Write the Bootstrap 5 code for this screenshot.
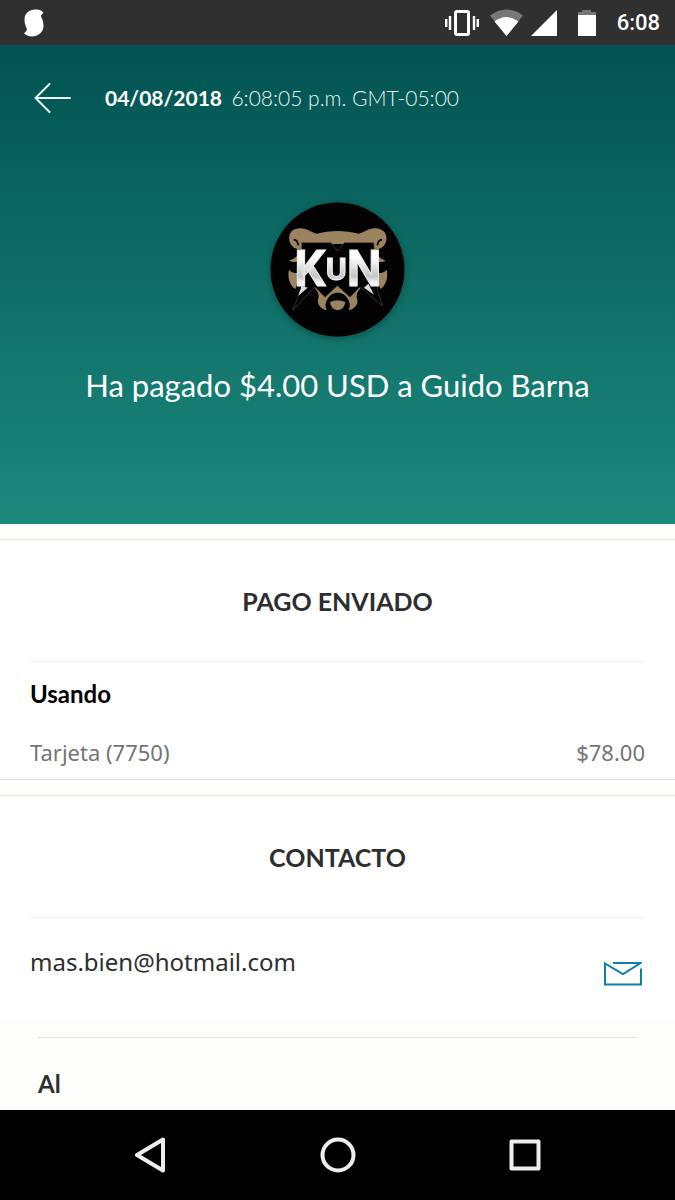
<!DOCTYPE html>
<html lang="es">
<head>
<meta charset="utf-8">
<meta name="viewport" content="width=device-width, initial-scale=1">
<title>Detalles del pago</title>
<link href="https://cdn.jsdelivr.net/npm/bootstrap@5.3.0/dist/css/bootstrap.min.css" rel="stylesheet">
<style>
  body { font-family: Lato, "Noto Sans", sans-serif; background: #fdfdfb; color: #2c2e2f; }
  svg { display: block; flex-shrink: 0; }
  .status-bar { height: 45px; background: #303030; padding: 0 15px 0 24px; }
  .clock { font: 500 22px/28px Roboto, sans-serif; color: #fff; }
  .hero { background: linear-gradient(#025351, #1c897c); padding: 37px 33px 119px; }
  .stamp { font-size: 21px; line-height: 32px; color: #e6f4f3; margin-left: 34px; }
  .hero-title { font-size: 31px; line-height: 40px; }
  .avatar { filter: drop-shadow(0 2px 3px rgba(0, 0, 0, .3)); margin-top: 88px; margin-bottom: 28px; }
  .panel { background: #fff; border: solid #e4e5e5; border-width: 1px 0; margin-top: 15px; padding: 0 30px; }
  .panel-open { border-bottom: 0; }
  .panel-title { font-size: 25px; line-height: 32px; padding: 45px 0 44px; border-bottom: 1px solid #eeefef; }
  .entry { font-size: 24px; line-height: 32px; }
  .email, .amount { font-family: "Noto Sans", sans-serif; }
  .email { font-size: 24px; line-height: 32px; }
  .amount { font-size: 22px; line-height: 30px; color: #737475; padding: 27px 0 12px; }
  .contact { padding: 28px 3px 36px 0; }
  .more { margin: 15px 38px 0; padding-top: 30px; border-top: 1px solid #e1e3e3; }
  .nav-keys { height: 90px; background: #000; padding: 0 56px; }
</style>
</head>
<body class="d-flex flex-column min-vh-100">

<header class="status-bar d-flex align-items-center">
  <svg width="20" height="28" viewBox="0 0 20 28" fill="#fff" aria-hidden="true"><path d="M19.500 3.500l-2.500 3C17 8.500 19.500 11 19.500 17 19.500 23 14 27.500 8 27.500c-3 0-5.500-1-8-3L3 21C3 19 0.500 16 .5 10.500 .5 4 5.500.5 11 .5c3.500 0 6 .5 8.500 3z"/></svg>
  <div class="d-flex align-items-center ms-auto">
    <svg width="152" height="28" viewBox="0 0 152 28" aria-hidden="true">
      <rect x="10.500" y="2.500" width="13" height="23" rx="1.500" fill="none" stroke="#fff" stroke-width="3"/>
      <path d="M5 7v14M1.200 10v8M29 7v14M32.800 10v8" stroke="#fff" stroke-width="2.400"/>
      <path d="M45 6.500Q61-5.500 78 6.500L61.500 27z" fill="#777"/>
      <path d="M49.500 12.500Q61 3.500 73.500 12.500L61.500 27z" fill="#fff"/>
      <path d="M112 1v26H86z" fill="#fff"/>
      <path d="M137 1h9v2h5v4h-18V3h4z" fill="#777"/>
      <path d="M133 6h18v21h-18z" fill="#fff"/>
    </svg>
    <span class="clock ms-3 ps-1">6:08</span>
  </div>
</header>

<main class="flex-grow-1">
  <section class="hero text-white text-center">
    <div class="d-flex align-items-center text-start">
      <button type="button" class="btn p-0 border-0" aria-label="Volver">
        <svg width="38" height="30" viewBox="0 0 38 30" fill="none" stroke="#e6f4f3" stroke-width="2" stroke-linecap="round" stroke-linejoin="round"><path d="M16.500 1L2.500 15l14 14M2.500 15H37"/></svg>
      </button>
      <div class="stamp"><strong class="text-white me-1">04/08/2018</strong> <span class="fw-light">6:08:05 p.m. GMT-05:00</span></div>
    </div>
    <svg class="avatar mx-auto" width="135" height="135" viewBox="30 31 405 405" role="img" aria-label="Guido Barna">
      <circle cx="232.500" cy="233.500" r="201" fill="#020202"/>
      <g fill="#9b835f">
        <path d="M88 145C84 119 104 108 125 110c20 2 30 14 46 16 40-11 84-11 124 0 16-2 26-14 46-16 21-2 42 10 38 35-2 18-17 29-34 27 2 15 10 27 32 35-15 8-35 3-46-6l-12-44H145l-12 44c-11 9-31 14-46 6 22-8 34-20 36-35-18 2-33-9-35-27z"/>
        <path d="M87 234c8 9 20 13 36 8l-17 50c-15-9-25-33-19-58zM380 234c-8 9-20 13-36 8l17 50c15-9 25-33 19-58z"/>
        <path d="M165 290l38-20h60l38 20c-11 14-13 20-9 34 3 15-10 29-26 31 5-11 5-21-2-32-7-14-18-20-31-20s-24 6-31 20c-7 11-7 21-2 32-16-2-29-16-26-31 4-14 2-20-9-34z"/>
        <path d="M210 331q22-10 46 0-3 23-23 25-20-2-23-25z"/>
      </g>
      <path d="M101 144q11 0 14 17M366 144q-11 0-14 17" fill="none" stroke="#020202" stroke-width="5"/>
      <path d="M125 153h88l20 25 20-25h88l13 147 14 43-68-57-30 31-38-35-37 35-30-31-67 69 26-62z" fill="#020202" stroke="#54483a" stroke-width="2"/>
      <path d="M125 282l-10 30 28-24zM325 276l17 33-30-21z" fill="#ddd"/>
      <defs><linearGradient id="steel" x1="0" y1="0" x2="0" y2="1"><stop offset=".3" stop-color="#fff"/><stop offset=".62" stop-color="#c4c4c4"/><stop offset=".72" stop-color="#f4f4f4"/></linearGradient></defs>
      <text x="234" y="284" text-anchor="middle" font-family="'Liberation Sans Narrow', Roboto, sans-serif" font-weight="700" font-size="148" fill="url(#steel)" stroke="#eee" stroke-width="3">K<tspan font-size="96" dy="-20">U</tspan><tspan dy="20">N</tspan></text>
    </svg>
    <h1 class="hero-title fw-normal mb-0">Ha pagado $4.00 USD a Guido Barna</h1>
  </section>

  <section class="panel">
    <h2 class="panel-title fw-bold text-center mb-0">PAGO ENVIADO</h2>
    <h3 class="entry fw-bold text-black mb-0 pt-3">Usando</h3>
    <div class="amount d-flex justify-content-between"><span>Tarjeta (7750)</span><span>$78.00</span></div>
  </section>

  <section class="panel panel-open">
    <h2 class="panel-title fw-bold text-center mb-0">CONTACTO</h2>
    <div class="contact d-flex justify-content-between align-items-start">
      <span class="email">mas.bien@hotmail.com</span>
      <a href="mailto:mas.bien@hotmail.com" aria-label="Enviar correo" class="pt-3"><svg width="38" height="24" viewBox="0 0 38 24" fill="none" stroke="#0d7fa8" stroke-width="2"><path d="M9 1h27.500L19 12 1 1.500v21h36V6.500"/></svg></a>
    </div>
  </section>

  <section class="more"><h3 class="entry fw-bold mb-0">Al</h3></section>
</main>

<nav class="nav-keys d-flex align-items-center" aria-label="Sistema">
  <button type="button" class="btn border-0 p-0 flex-fill" aria-label="Atrás"><svg class="mx-auto" width="36" height="36" viewBox="0 0 36 36" fill="none" stroke="#eee" stroke-width="4" stroke-linejoin="round"><path d="M31 2.500v31L5 18z"/></svg></button>
  <button type="button" class="btn border-0 p-0 flex-fill" aria-label="Inicio"><svg class="mx-auto" width="36" height="36" viewBox="0 0 36 36" fill="none" stroke="#eee" stroke-width="4"><circle cx="18" cy="18" r="15.500"/></svg></button>
  <button type="button" class="btn border-0 p-0 flex-fill" aria-label="Recientes"><svg class="mx-auto" width="36" height="36" viewBox="0 0 36 36" fill="none" stroke="#eee" stroke-width="4" stroke-linejoin="round"><path d="M4.500 4.500h27v27h-27z"/></svg></button>
</nav>

<script src="https://cdn.jsdelivr.net/npm/bootstrap@5.3.0/dist/js/bootstrap.bundle.min.js"></script>
</body>
</html>
